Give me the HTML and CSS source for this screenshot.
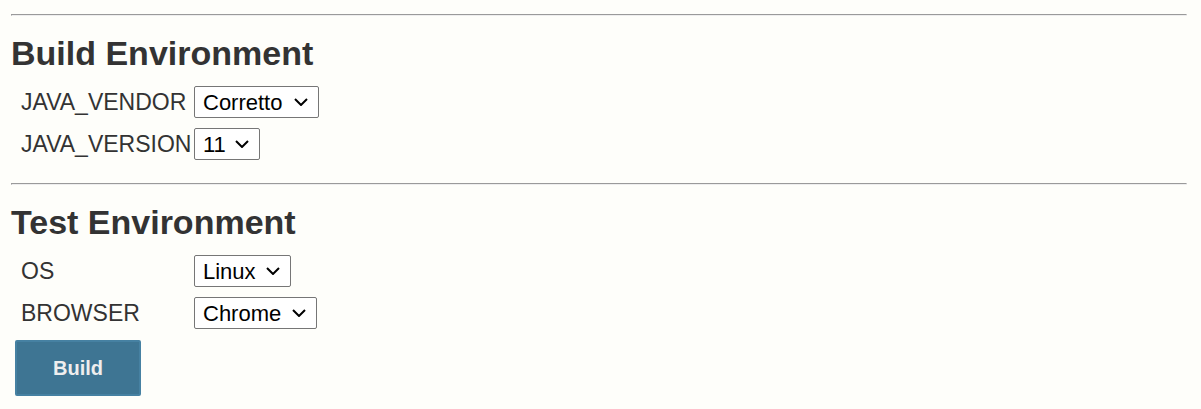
FILE: index.html
```html
<!DOCTYPE html>
<html lang="en">

<head>
    <meta charset="UTF-8">
    <meta name="viewport" content="width=device-width, initial-scale=1.0">
    <title>Build with Parameters</title>
    <link rel="stylesheet" href="styles.css">
</head>

<body>
    <form class="params">
        <hr />
        <h2>Build Environment</h2>
        <div class="fields">
            <label>JAVA_VENDOR</label>
            <select class="vendor">
                <option>Corretto</option>
                <option>Temurin</option>
            </select>
            <label>JAVA_VERSION</label>
            <select class="version">
                <option>11</option>
                <option>17</option>
            </select>
        </div>

        <hr />
        <h2>Test Environment</h2>
        <div class="fields">
            <label>OS</label>
            <select class="os">
                <option>Linux</option>
                <option>Windows</option>
            </select>
            <label>BROWSER</label>
            <select class="browser">
                <option>Chrome</option>
                <option>Firefox</option>
            </select>
        </div>

        <button type="button" class="build">Build</button>
    </form>
</body>

</html>
```

FILE: styles.css
```css
body {
    margin: 0;
    padding: 0 14px 0 11px;
    background: #fefefa;
    color: #333;
    font-family: "Liberation Sans", Arial, sans-serif;
}

hr {
    margin: 14px 0 0;
}

h2 {
    margin: 17px 0 0 0;
    font-size: 34px;
    line-height: 41px;
    font-weight: bold;
}

/* label column + select column */
.fields {
    display: grid;
    grid-template-columns: 173px auto;
    justify-items: start;
    align-items: start;
    row-gap: 10px;
    margin: 12px 0 23px 10px;
    font-size: 23px;
}

.fields label {
    line-height: 32px;
}

/* chevron drawn as svg, like the windows chrome one */
.fields select {
    appearance: none;
    -webkit-appearance: none;
    height: 32px;
    padding: 0 0 0 8px;
    font-family: "Liberation Sans", Arial, sans-serif;
    font-size: 22px;
    color: #000;
    background: #fff url("data:image/svg+xml,%3Csvg xmlns='http://www.w3.org/2000/svg' width='14' height='8' viewBox='0 0 14 8'%3E%3Cpath d='M1 1l6 6 6-6' fill='none' stroke='%23000' stroke-width='2'/%3E%3C/svg%3E") no-repeat right 10px center;
    border: 1px solid #767676;
    border-radius: 2px;
}

.vendor { width: 125px; }
.version { width: 66px; }
.os { width: 97px; }
.browser { width: 123px; }

.build {
    display: block;
    width: 126px;
    height: 56px;
    margin: -12px 0 0 4px;
    background: #3e7593;
    border: 2px solid #4681a2;
    border-radius: 2px;
    color: #eeeeee;
    font-family: "Liberation Sans", Arial, sans-serif;
    font-size: 20px;
    font-weight: bold;
}
```
